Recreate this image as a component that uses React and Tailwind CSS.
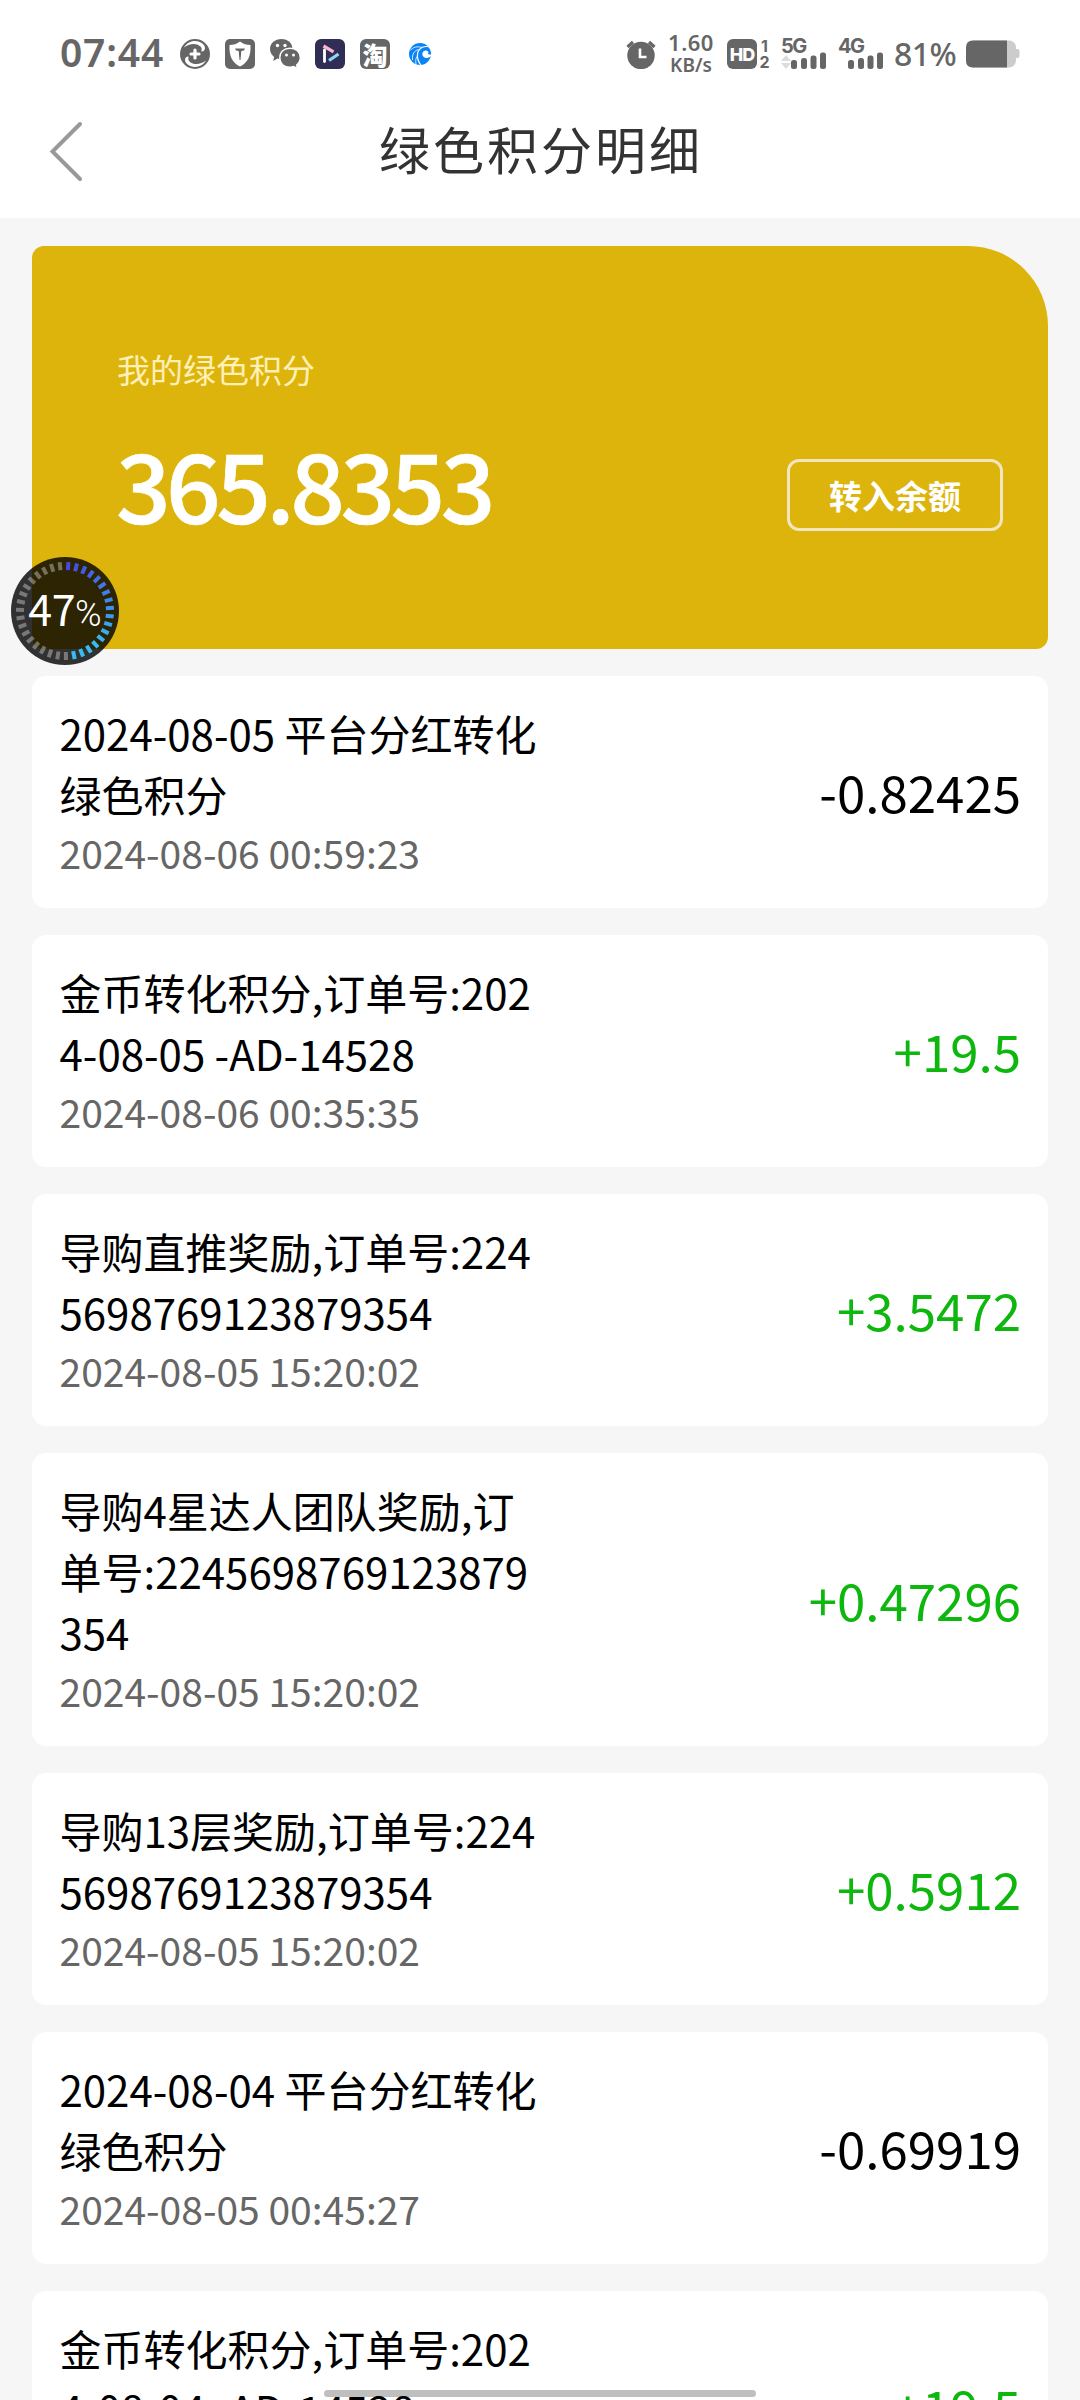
const records = [
  { title: '2024-08-05 平台分红转化绿色积分', time: '2024-08-06 00:59:23', amount: '-0.82425' },
  { title: '金币转化积分,订单号:2024-08-05 -AD-14528', time: '2024-08-06 00:35:35', amount: '+19.5' },
  { title: '导购直推奖励,订单号:2245698769123879354', time: '2024-08-05 15:20:02', amount: '+3.5472' },
  { title: '导购4星达人团队奖励,订单号:2245698769123879354', time: '2024-08-05 15:20:02', amount: '+0.47296' },
  { title: '导购13层奖励,订单号:2245698769123879354', time: '2024-08-05 15:20:02', amount: '+0.5912' },
  { title: '2024-08-04 平台分红转化绿色积分', time: '2024-08-05 00:45:27', amount: '-0.69919' },
  { title: '金币转化积分,订单号:2024-08-04 -AD-14528', time: '2024-08-05 00:35:35', amount: '+19.5' },
];

const G = '#666666';

function NoticeIcons() {
  return (
    <div className="flex items-center gap-[15px]">
      <svg width="30" height="30" viewBox="0 0 30 30">
        <circle cx="15" cy="15" r="15" fill={G} />
        <path d="M4 8.500 C8 1.500 17 0 23 5 C26 8 25.500 12 22 12.500 C20.500 12.500 23 10 20.500 7.500 C16 3.500 9 4.500 4 8.500Z" fill="#fff" />
        <path d="M26 21.500 C22 28.500 13 30 7 25 C4 22 4.500 18 8 17.500 C9.500 17.500 7 20 9.500 22.500 C14 26.500 21 25.500 26 21.500Z" fill="#fff" />
        <path d="M15 11v8M11 15h8" stroke="#fff" strokeWidth="3.200" strokeLinecap="round" />
      </svg>
      <svg width="30" height="30" viewBox="0 0 30 30">
        <rect width="30" height="30" rx="5" fill={G} />
        <path d="M15 2.500 C18 5 21.500 6 25.500 6 C26 17 23 23.500 15 27.500 C7 23.500 4 17 4.500 6 C8.500 6 12 5 15 2.500Z" fill="#fff" />
        <path d="M10 9.500 H20 L19 11.500 L16.300 12 L15.500 21 H14.500 L13.700 12 L11 11.500Z" fill={G} />
      </svg>
      <svg width="31" height="30" viewBox="0 0 31 30" className="-mr-px">
        <path d="M11.500 0 C5 0 0 4.300 0 10 C0 13.300 1.600 16 4.200 18 L3.200 22 L7.500 19.500 C9 20 10 20 11.500 20 C18 20 22.500 15.500 22.500 10 C22.500 4.300 18 0 11.500 0Z" fill={G} />
        <circle cx="7.500" cy="6.500" r="1.700" fill="#fff" /><circle cx="15" cy="6.500" r="1.700" fill="#fff" />
        <path d="M20 9.200 C14 9.200 9.800 13 9.800 18.800 C9.800 24.500 14 28.300 20 28.300 C21.500 28.300 22.500 28 23.800 27.500 L27.500 29.500 L26.600 26 C29 24 30.300 21.500 30.300 18.800 C30.300 13 26 9.200 20 9.200Z" fill={G} stroke="#fff" strokeWidth="1.400" />
        <circle cx="16.500" cy="16" r="1.500" fill="#fff" /><circle cx="23.500" cy="16" r="1.500" fill="#fff" />
      </svg>
      <svg width="30" height="30" viewBox="0 0 30 30">
        <rect width="30" height="30" rx="6" fill="#302e54" />
        <path d="M9.500 11V22.500" stroke="#fff" strokeWidth="2.800" strokeLinecap="round" />
        <path d="M8.500 7 L18.500 12.800" stroke="#fbb6d0" strokeWidth="3.200" />
        <path d="M14 21.500 L23.500 15" stroke="#8fd6f7" strokeWidth="3.200" />
      </svg>
      <div className="flex h-[30px] w-[30px] items-center justify-center rounded-md bg-[#666] text-[25px] leading-[30px] font-black text-white">淘</div>
      <svg width="30" height="30" viewBox="0 0 30 30">
        <circle cx="15" cy="15" r="11" fill="#0a84f5" />
        <path d="M27 9 C20 5.500 13.500 8.500 12.500 15 C12 19 13.500 23 16 26.500" fill="none" stroke="#fff" strokeWidth="1.200" />
        <path d="M13.500 10.500 C9.500 11.500 7 15 7.500 21M17 8.500 C13 7 8 8 5 11.500M12.500 17 C10.500 19 10.500 22 11 25.500" fill="none" stroke="#fff" strokeWidth="0.800" />
        <path d="M27 16 C24.500 19.500 19.500 19.800 17.800 17 C16.500 14.300 18.300 11.300 21 11.500 C23.300 11.700 24 13.500 23 15 Z" fill="#fff" />
      </svg>
    </div>
  );
}

function Signal({ label, arrows }) {
  return (
    <div className="relative h-[30px] w-[46px]">
      <div className="absolute top-0 left-0 font-[Inter] text-[20px] leading-[15px] font-bold tracking-[-1.500px]">{label}</div>
      <svg className="absolute top-0 left-0" width="46" height="30" viewBox="0 0 46 30">
        {arrows && <path d="M0 22 L5 16 L10 22Z M0 24 H10 L5 30Z" fill="#dcdcdc" />}
        <rect x="10" y="21" width="6" height="9" rx="2.500" fill={G} />
        <rect x="20" y="19" width="6" height="11" rx="2.500" fill={G} />
        <rect x="29.500" y="16.500" width="6" height="13.500" rx="2.500" fill={G} />
        <rect x="39" y="13.500" width="6" height="16.500" rx="2.500" fill={G} />
      </svg>
    </div>
  );
}

function StatusBar() {
  return (
    <div className="flex h-[108px] items-center pl-[60px] text-[#666]">
      <div className="mb-[5px] w-[120px] font-['Noto_Sans'] text-[39px] leading-[40px] font-semibold tracking-[0.8px]">07:44</div>
      <NoticeIcons />
      <div className="ml-[191px] flex items-center">
        <svg width="30" height="30" viewBox="0 0 30 30">
          <circle cx="15" cy="16.500" r="13.700" fill={G} />
          <path d="M1.500 8 L7 3M28.500 8 L23 3" stroke={G} strokeWidth="3.200" />
          <path d="M14 9.500V18H20.500" fill="none" stroke="#fff" strokeWidth="2.600" />
        </svg>
        <div className="mb-[3px] ml-3 flex w-[46px] flex-col items-center font-['Noto_Sans'] font-semibold">
          <span className="text-[22px] leading-[24px] tracking-[0.5px]">1.60</span>
          <span className="text-[19px] leading-[22px]">KB/s</span>
        </div>
        <div className="ml-[13px] flex h-[30px] w-[30px] items-center justify-center rounded-md bg-[#666] font-[Inter] text-[18px] font-extrabold tracking-[-1px] text-white">HD</div>
        <div className="ml-[2px] flex h-[32px] w-[11px] flex-col items-center font-[Inter] text-[16px] leading-[16px] font-bold">
          <span>1</span>
          <span>2</span>
        </div>
        <div className="ml-[11px]"><Signal label="5G" arrows /></div>
        <div className="ml-[11px]"><Signal label="4G" /></div>
        <div className="mb-px ml-[10px] w-[72px] font-['Noto_Sans'] text-[32px] leading-[32px] font-medium tracking-[-0.5px]">81%</div>
        <svg width="54" height="28" viewBox="0 0 54 28">
          <rect x="0" y="0.500" width="50" height="27" rx="7" fill="#ccc" />
          <path d="M50 9 h1.500 q2 0 2 2 v5 q0 2 -2 2 h-1.500z" fill="#ccc" />
          <path d="M7 0.500 H41 V27.500 H7 Q0 27.500 0 20.500 V7.500 Q0 0.500 7 0.500Z" fill={G} />
        </svg>
      </div>
    </div>
  );
}

function ProgressBall() {
  const ticks = Array.from({ length: 35 }, (_, i) => i);
  return (
    <div className="absolute top-[557px] left-[11px] flex h-[108px] w-[108px] items-center justify-center rounded-full bg-black/80 text-white">
      <svg className="absolute inset-0" width="108" height="108" viewBox="0 0 108 108">
        {ticks.map((i) => {
          const t = Math.min(1, i / 13);
          const c = `rgb(${Math.round(74 - 22 * t)},${Math.round(72 + 118 * t)},${Math.round(226 + 18 * t)})`;
          return (
            <rect key={i} x="52" y="5" width="4" height="8" fill={i < 17 ? c : 'rgba(255,255,255,0.35)'} transform={`rotate(${4 + (i * 360) / 35} 54 54)`} />
          );
        })}
      </svg>
      <div className="mb-[2px] flex items-baseline">
        <span className="text-[43px] leading-[42px] tracking-[-0.5px]">47</span>
        <span className="font-[Roboto] text-[36px] leading-[42px] font-light">%</span>
      </div>
    </div>
  );
}

function Record({ title, time, amount }) {
  return (
    <div className="flex shrink-0 items-center justify-between rounded-[14px] bg-white px-[27px] pt-[26px] pb-7">
      <div className="w-1/2 pl-[0.5px]">
        <div className="text-[42px] leading-[61px] break-all text-black">{title}</div>
        <div className="text-[39px] leading-[56px] whitespace-nowrap text-[#666]">{time}</div>
      </div>
      <div className={amount.startsWith('+') ? 'text-[51px] leading-[74px] text-[#0db70d]' : 'text-[51px] leading-[74px] text-black'}>{amount}</div>
    </div>
  );
}

export default function App() {
  return (
    <div className="relative flex h-[2400px] w-[1080px] flex-col overflow-hidden bg-[#f6f6f6] font-['Noto_Sans_CJK_SC',sans-serif]">
      <header className="h-[218px] shrink-0 bg-white">
        <StatusBar />
        <div className="grid h-[86px] grid-cols-[1fr_auto_1fr] items-center">
          <svg className="ml-[48px]" width="38" height="62" viewBox="0 0 38 62">
            <path d="M32 4 L4.500 31.500 L32 59" fill="none" stroke="#999" strokeWidth="4" strokeLinecap="round" />
          </svg>
          <h1 className="mb-[6px] pl-[2px] text-[51px] leading-[74px] tracking-[3px] text-[#333]">绿色积分明细</h1>
        </div>
      </header>

      <main className="flex flex-col gap-[27px] px-8 pt-7">
        <section className="flex h-[403px] shrink-0 justify-between rounded-[12px] rounded-tr-[80px] bg-[#ddb40b] pr-[45px] pl-[85px]">
          <div className="pt-[99px]">
            <div className="text-[33px] leading-[48px] text-[#fff0b8]">我的绿色积分</div>
            <div className="mt-[21px] -ml-px text-[96px] leading-[138px] font-medium tracking-[-4.600px] text-white [-webkit-text-stroke:0.7px_white]">365.8353</div>
          </div>
          <button className="mt-[213px] h-[72px] w-[216px] rounded-[12px] border-[3px] border-[#f1e6bd] pb-px text-[33px] leading-[48px] font-bold text-white">转入余额</button>
        </section>
        {records.map((r, i) => (
          <Record key={i} {...r} />
        ))}
      </main>

      <ProgressBall />
      <div className="absolute top-[2390px] left-[324px] h-[7px] w-[432px] rounded-full bg-black/25" />
    </div>
  );
}
